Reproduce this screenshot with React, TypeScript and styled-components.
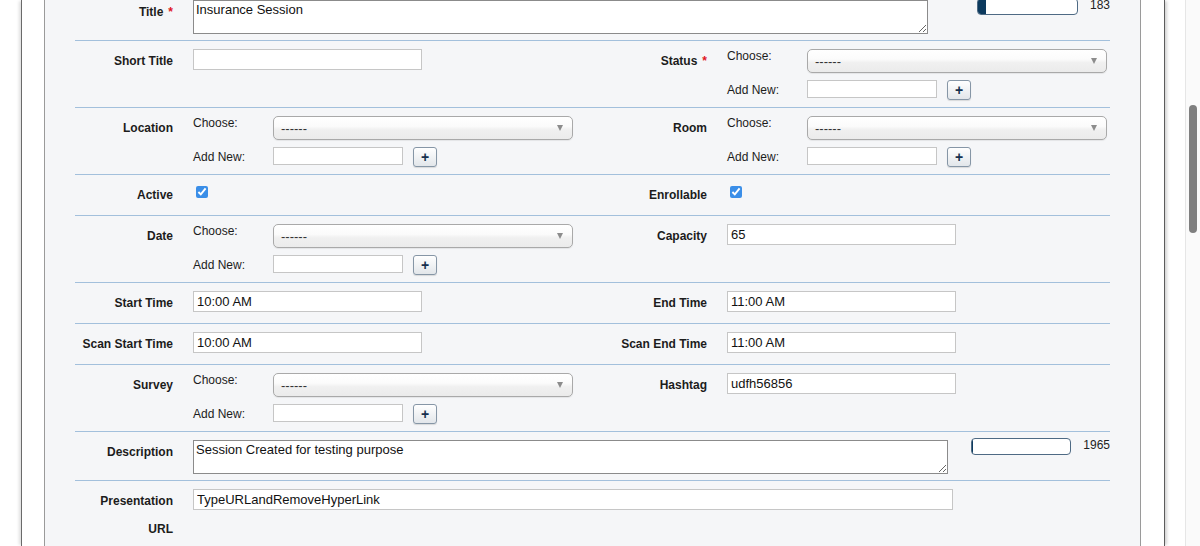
import React from "react";
import styled, { createGlobalStyle } from "styled-components";

const Global = createGlobalStyle`
  html, body { margin: 0; padding: 0; background: #ffffff; overflow: hidden; }
  body { font-family: "Liberation Sans", Arial, sans-serif; }
  * { box-sizing: border-box; }
`;

const Page = styled.div`
  display: flex;
  width: 1200px;
  height: 546px;
  overflow: hidden;
`;

const Main = styled.div`
  flex: 1;
  height: 100%;
  overflow: hidden;
`;

const Frame = styled.div`
  margin-left: 21px;
  width: 1144px;
  min-height: 100%;
  background: #ffffff;
  border-left: 1px solid #6a6a6a;
  border-right: 1px solid #5c5c5c;
  box-shadow: -3px 0 3px -1px rgba(0, 0, 0, 0.13), 3px 0 3px -1px rgba(0, 0, 0, 0.18);
  padding: 0 23px 0 22px;
  display: flex;
`;

const Panel = styled.div`
  flex: 1;
  min-height: 546px;
  background: #f5f6f8;
  border-left: 1px solid #9a9a9a;
  border-right: 1px solid #9a9a9a;
  padding: 0 30px;
`;

const Row = styled.div<{ $pt?: number; $pb?: number }>`
  display: grid;
  grid-template-columns: 118px 399px 135px 1fr;
  padding: ${(p) => p.$pt ?? 8}px 0 ${(p) => p.$pb ?? 7}px;
  border-bottom: 1px solid #a3c0dc;
`;

const LastRow = styled(Row)`
  border-bottom: none;
`;

const Label = styled.div`
  padding: 5px 20px 0 0;
  text-align: right;
  font-weight: bold;
  font-size: 12px;
  line-height: 14px;
  color: #1c1c1c;
`;

const StackLabel = styled(Label)`
  display: flex;
  flex-direction: column;
  align-items: flex-end;
  gap: 14px;
`;

const Req = styled.span`
  color: #e0141e;
  margin-left: 5px;
`;

const Cell = styled.div`
  display: flex;
  align-items: flex-start;
`;

const Wide = styled.div`
  grid-column: 2 / -1;
  display: flex;
  align-items: flex-start;
`;

const TextInput = styled.input<{ $w?: number }>`
  width: ${(p) => p.$w ?? 229}px;
  height: 21px;
  margin: 0 0 4px;
  padding: 0 3px;
  border: 1px solid #c6c6c6;
  border-radius: 0;
  background: #ffffff;
  font-family: "Liberation Sans", Arial, sans-serif;
  font-size: 13px;
  color: #111;
  outline: none;
`;

const SmallInput = styled(TextInput)`
  height: 18px;
  margin: 0;
`;

const Area = styled.textarea<{ $w: number }>`
  width: ${(p) => p.$w}px;
  height: 34px;
  margin: 0;
  padding: 1px 2px;
  border: 1px solid #8b8b8b;
  border-radius: 0;
  background: #ffffff;
  font-family: "Liberation Sans", Arial, sans-serif;
  font-size: 13px;
  line-height: 15px;
  color: #111;
  resize: both;
  outline: none;
`;

const Counter = styled.div<{ $ml: number }>`
  display: flex;
  align-items: flex-start;
  gap: 12px;
  margin-left: ${(p) => p.$ml}px;
  margin-top: -2px;
`;

const Bar = styled.div<{ $w: number }>`
  width: ${(p) => p.$w}px;
  height: 17px;
  border: 1px solid #4e6a84;
  border-radius: 4px;
  background: #ffffff;
  overflow: hidden;
`;

const BarFill = styled.div`
  height: 100%;
  background: #0c3a5e;
`;

const CountText = styled.span`
  font-size: 12px;
  line-height: 14px;
  color: #222;
`;

const ChooseGrid = styled.div`
  display: grid;
  grid-template-columns: 80px auto;
  row-gap: 7px;
  align-items: start;
`;

const ChooseText = styled.span<{ $pt?: number }>`
  padding-top: ${(p) => p.$pt ?? 0}px;
  font-size: 12px;
  line-height: 14px;
  color: #1c1c1c;
`;

const SelectBox = styled.div`
  width: 300px;
  height: 24px;
  border: 1px solid #a9a9a9;
  border-radius: 5px;
  background: linear-gradient(to bottom, #ffffff 0%, #fbfbfb 42%, #f0f0f0 58%, #ebebeb 100%);
  box-shadow: 0 1px 1px rgba(0, 0, 0, 0.07);
  display: flex;
  align-items: center;
  justify-content: space-between;
  padding: 0 9px 0 7px;
  font-size: 13px;
  color: #333;
`;

const Arrow = styled.span`
  width: 0;
  height: 0;
  border-left: 3.5px solid transparent;
  border-right: 3.5px solid transparent;
  border-top: 6px solid #8c8c8c;
`;

const AddRow = styled.div`
  display: flex;
  align-items: flex-start;
  gap: 10px;
`;

const PlusButton = styled.button`
  width: 24px;
  height: 20px;
  padding: 0;
  border: 1px solid #8696a6;
  border-radius: 3px;
  background: linear-gradient(to bottom, #ffffff, #e2e6ea);
  box-shadow: 0 1px 1px rgba(0, 0, 0, 0.12);
  font-family: "Liberation Sans", Arial, sans-serif;
  font-weight: bold;
  font-size: 14px;
  line-height: 16px;
  color: #15304e;
  display: flex;
  align-items: center;
  justify-content: center;
`;

const CheckCell = styled.div`
  height: 25px;
`;

const Check = styled.input`
  width: 12px;
  height: 12px;
  margin: 3px 0 0 3px;
  accent-color: #3a8ee8;
`;

const Track = styled.div`
  width: 15px;
  flex: none;
  height: 100%;
  border-left: 1px solid #e6e6e6;
  background: #fafafa;
  padding-top: 105px;
`;

const Thumb = styled.div`
  width: 8px;
  height: 128px;
  margin-left: 3px;
  border-radius: 4px;
  background: #7f7f7f;
`;

function ChooseField() {
  return (
    <ChooseGrid>
      <ChooseText>Choose:</ChooseText>
      <SelectBox>
        <span>------</span>
        <Arrow />
      </SelectBox>
      <ChooseText $pt={3}>Add New:</ChooseText>
      <AddRow>
        <SmallInput $w={130} defaultValue="" />
        <PlusButton type="button">+</PlusButton>
      </AddRow>
    </ChooseGrid>
  );
}

function FieldLabel({ text, required }: { text: string; required?: boolean }) {
  return (
    <Label>
      {text}
      {required && <Req>*</Req>}
    </Label>
  );
}

function CountBar({ ml, width, fill, count }: { ml: number; width: number; fill: number; count: string }) {
  return (
    <Counter $ml={ml}>
      <Bar $w={width}>
        <BarFill style={{ width: `${fill}px` }} />
      </Bar>
      <CountText>{count}</CountText>
    </Counter>
  );
}

export default function App() {
  return (
    <Page>
      <Global />
      <Main>
        <Frame>
          <Panel>
            <Row $pt={0} $pb={6}>
              <FieldLabel text="Title" required />
              <Wide>
                <Area $w={737} defaultValue="Insurance Session" />
                <CountBar ml={49} width={101} fill={8} count="183" />
              </Wide>
            </Row>

            <Row>
              <FieldLabel text="Short Title" />
              <Cell>
                <TextInput defaultValue="" />
              </Cell>
              <FieldLabel text="Status" required />
              <Cell>
                <ChooseField />
              </Cell>
            </Row>

            <Row>
              <FieldLabel text="Location" />
              <Cell>
                <ChooseField />
              </Cell>
              <FieldLabel text="Room" />
              <Cell>
                <ChooseField />
              </Cell>
            </Row>

            <Row>
              <FieldLabel text="Active" />
              <CheckCell>
                <Check type="checkbox" defaultChecked />
              </CheckCell>
              <FieldLabel text="Enrollable" />
              <CheckCell>
                <Check type="checkbox" defaultChecked />
              </CheckCell>
            </Row>

            <Row>
              <FieldLabel text="Date" />
              <Cell>
                <ChooseField />
              </Cell>
              <FieldLabel text="Capacity" />
              <Cell>
                <TextInput defaultValue="65" />
              </Cell>
            </Row>

            <Row>
              <FieldLabel text="Start Time" />
              <Cell>
                <TextInput defaultValue="10:00 AM" />
              </Cell>
              <FieldLabel text="End Time" />
              <Cell>
                <TextInput defaultValue="11:00 AM" />
              </Cell>
            </Row>

            <Row>
              <FieldLabel text="Scan Start Time" />
              <Cell>
                <TextInput defaultValue="10:00 AM" />
              </Cell>
              <FieldLabel text="Scan End Time" />
              <Cell>
                <TextInput defaultValue="11:00 AM" />
              </Cell>
            </Row>

            <Row>
              <FieldLabel text="Survey" />
              <Cell>
                <ChooseField />
              </Cell>
              <FieldLabel text="Hashtag" />
              <Cell>
                <TextInput defaultValue="udfh56856" />
              </Cell>
            </Row>

            <Row $pb={6}>
              <FieldLabel text="Description" />
              <Wide>
                <Area $w={757} defaultValue="Session Created for testing purpose" />
                <CountBar ml={23} width={100} fill={1} count="1965" />
              </Wide>
            </Row>

            <LastRow>
              <StackLabel>
                <span>Presentation</span>
                <span>URL</span>
              </StackLabel>
              <Wide>
                <TextInput $w={760} defaultValue="TypeURLandRemoveHyperLink" />
              </Wide>
            </LastRow>
          </Panel>
        </Frame>
      </Main>
      <Track>
        <Thumb />
      </Track>
    </Page>
  );
}
